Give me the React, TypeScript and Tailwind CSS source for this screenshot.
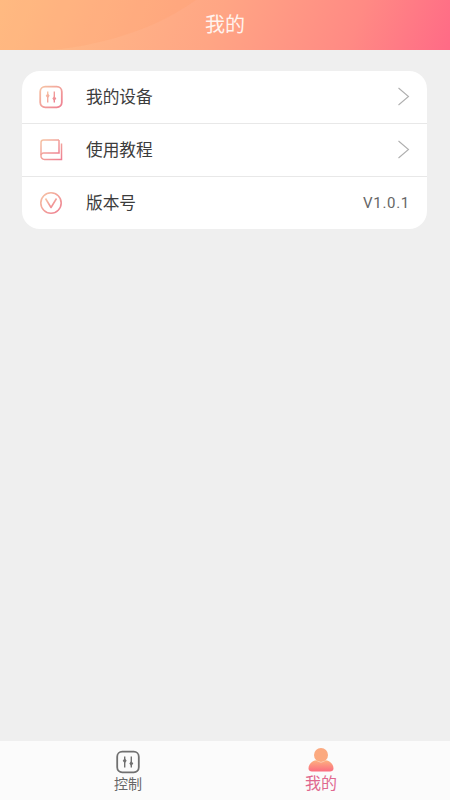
import React from "react";

const font = "font-['Noto_Sans_CJK_SC','Noto_Sans',sans-serif]";

const GradDefs = () => (
  <svg className="absolute w-0 h-0">
    <defs>
      <linearGradient id="iconGrad" x1="0" y1="0" x2="1" y2="1">
        <stop offset="0" stopColor="#f6c4a4" />
        <stop offset="1" stopColor="#ee7f92" />
      </linearGradient>
      <linearGradient id="userGrad" x1="0" y1="0" x2="0" y2="1">
        <stop offset="0" stopColor="#fdb27f" />
        <stop offset="1" stopColor="#fb6c80" />
      </linearGradient>
    </defs>
  </svg>
);

const SlidersIcon = ({ stroke }: { stroke: string }) => (
  <svg width="24" height="24" viewBox="0 0 24 24" fill="none">
    <rect x="1.2" y="1.7" width="21.6" height="20.6" rx="5" stroke={stroke} strokeWidth="1.8" />
    <path d="M8.7 6.5v11M15.3 6.5v11" stroke={stroke} strokeWidth="1.4" />
    <path d="M8.7 8.2l2 2.5-2 2.5-2-2.5zM15.3 11l2 2.5-2 2.5-2-2.5z" fill={stroke} />
  </svg>
);

const BookIcon = () => (
  <svg width="24" height="24" viewBox="0 0 24 24" fill="none" stroke="url(#iconGrad)" strokeWidth="1.5">
    <path d="M20 2H4.5A2.5 2.5 0 0 0 2 4.5v13" />
    <path d="M2 17.5A2.5 2.5 0 0 1 4.5 15H20V2" />
    <path d="M2 17.5A3.5 3.5 0 0 0 5.5 21.5H22.5V5.5" />
    <path d="M5 18.5h15" />
  </svg>
);

const VersionIcon = () => (
  <svg width="24" height="24" viewBox="0 0 24 24" fill="none" stroke="url(#iconGrad)" strokeWidth="1.6">
    <circle cx="12" cy="12" r="10.2" />
    <path d="M6.5 7.5L12 16.5l5.5-9" strokeLinejoin="round" />
  </svg>
);

const Chevron = () => (
  <svg width="13" height="19" viewBox="0 0 13 19" fill="none">
    <path d="M1.5 1l10 8.5-10 8.5" stroke="#b0b0b0" strokeWidth="1.1" />
  </svg>
);

const UserIcon = () => (
  <svg width="26" height="24" viewBox="0 0 26 24">
    <circle cx="13" cy="7" r="7" fill="#fba97f" />
    <path d="M0.5 20.5C0.5 15.5 5 12.5 8.5 12.2c1.5 1.4 3 2 4.5 2s3-.6 4.5-2c3.5.3 8 3.3 8 8.3 0 2-1.5 3-3.5 3H4c-2 0-3.5-1-3.5-3z" fill="url(#userGrad)" />
  </svg>
);

const Row = ({ icon, label, right, last }: { icon: React.ReactNode; label: string; right: React.ReactNode; last?: boolean }) => (
  <div className={`flex items-center pl-[17px] pr-[17px] ${last ? "h-[52px]" : "h-[53px] border-b border-[#e8e8e8]"}`}>
    <div className="w-[24px] h-[24px] -mt-[1px] flex items-center justify-center">{icon}</div>
    <span className={`ml-[23px] text-[16.7px] text-[#3c3c3c] leading-none ${last ? "-mt-[1px]" : "-mt-[2px]"}`}>{label}</span>
    <div className="ml-auto -mt-[1px] flex items-center">{right}</div>
  </div>
);

export default function App() {
  return (
    <div className={`w-[450px] h-[800px] flex flex-col bg-[#efefef] overflow-hidden ${font}`}>
      <GradDefs />
      <header className="relative h-[50px] shrink-0 flex items-center justify-center bg-[linear-gradient(112deg,#ffc289_0%,#ffa584_48%,#ff8a84_78%,#ff6a86_100%)] overflow-hidden">
        <svg className="absolute left-0 top-0" width="450" height="50" viewBox="0 0 450 50">
          <path d="M0 0H196C160 26 110 44 52 50H0Z" fill="#ff9a66" fillOpacity="0.2" />
        </svg>
        <span className="relative -mt-[3px] text-[20px] text-[#fff3ee] leading-none">我的</span>
      </header>

      <main className="flex-1 pt-[21px] px-[22px]">
        <div className="w-[405px] bg-white rounded-[18px] overflow-hidden">
          <Row icon={<SlidersIcon stroke="url(#iconGrad)" />} label="我的设备" right={<Chevron />} />
          <Row icon={<BookIcon />} label="使用教程" right={<Chevron />} />
          <Row
            icon={<VersionIcon />}
            label="版本号"
            last
            right={<span className="mt-[1px] text-[15px] tracking-[0.7px] text-[#666666] font-['Roboto',sans-serif]">V1.0.1</span>}
          />
        </div>
      </main>

      <nav className="h-[59px] shrink-0 bg-[#fbfbfb] flex justify-between pl-[114px] pr-[113px]">
        <div className="flex flex-col items-center pt-[9px]">
          <SlidersIcon stroke="#707070" />
          <span className="mt-[1px] text-[14px] leading-[16px] text-[#666666]">控制</span>
        </div>
        <div className="flex flex-col items-center pt-[7px]">
          <UserIcon />
          <span className="text-[16px] leading-[20px] text-[#e0688f]">我的</span>
        </div>
      </nav>
    </div>
  );
}
